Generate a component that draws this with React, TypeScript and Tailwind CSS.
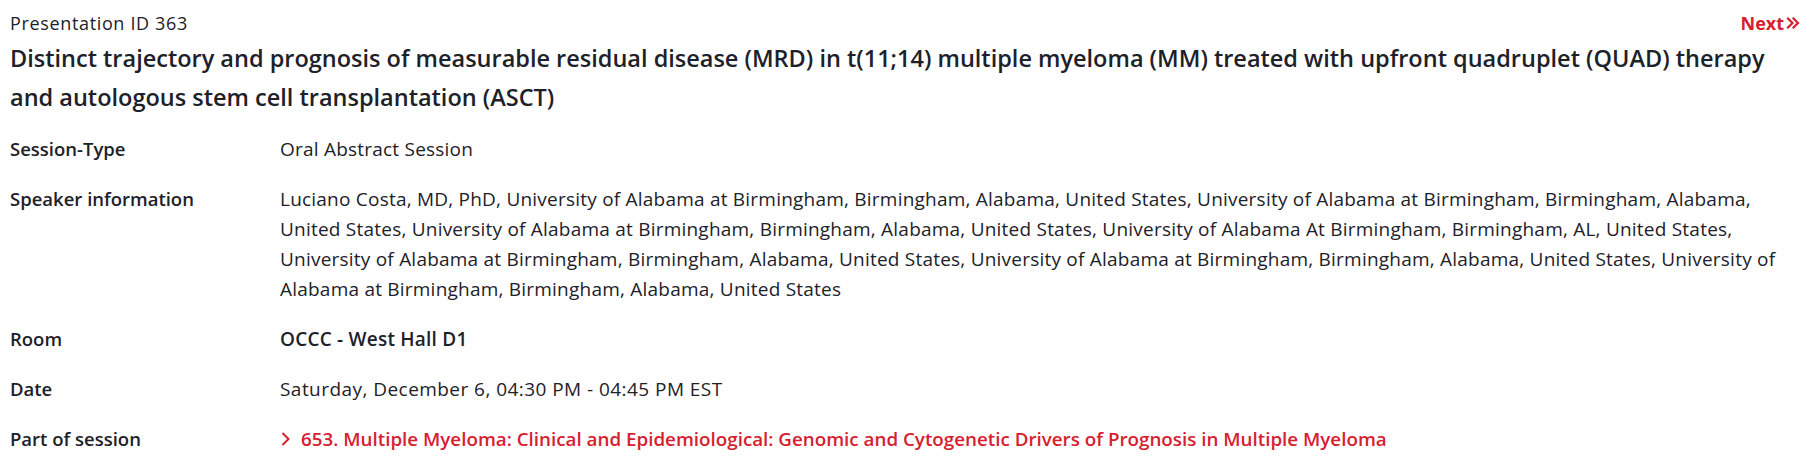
import React from "react";

const Row = ({ label, children }: { label: string; children: React.ReactNode }) => (
  <div className="grid grid-cols-[270px_1fr] leading-[30px]">
    <div className="font-semibold text-[18.5px] text-[#1d2129]">{label}</div>
    <div className="text-[19px] tracking-[0.22px] text-[#1d2129]">{children}</div>
  </div>
);

export default function App() {
  return (
    <div className="w-[1811px] h-[467px] bg-white px-[10px] pt-[11px]" style={{ fontFamily: "'Open Sans', 'Noto Sans', sans-serif" }}>
      <div className="flex items-center justify-between leading-[24px]">
        <span className="text-[18px] tracking-[0.65px] text-[#1d2129]">Presentation ID 363</span>
        <a className="flex items-center text-[18px] font-bold text-[#d7202f] mr-[1px]" href="#">
          Next
          <svg width="14" height="14" viewBox="0 0 14 14" className="ml-[2px]" fill="none" stroke="#d7202f" strokeWidth="2.2" strokeLinecap="square">
            <path d="M2 2.5 L6.5 7 L2 11.5" />
            <path d="M7.5 2.5 L12 7 L7.5 11.5" />
          </svg>
        </a>
      </div>
      <h1 className="mt-[4px] text-[23.5px] leading-[39px] font-semibold text-[#1d2129]">
        <span className="block whitespace-nowrap">
          Distinct trajectory and prognosis of measurable residual disease (MRD) in t(11;14) multiple myeloma (MM) treated with upfront quadruplet (QUAD) therapy
        </span>
        <span className="block whitespace-nowrap">and autologous stem cell transplantation (ASCT)</span>
      </h1>
      <div className="mt-[17px] flex flex-col gap-y-5">
        <Row label="Session-Type">Oral Abstract Session</Row>
        <Row label="Speaker information">
          Luciano Costa, MD, PhD, University of Alabama at Birmingham, Birmingham, Alabama, United States, University of Alabama at Birmingham, Birmingham, Alabama,
          <br />
          United States, University of Alabama at Birmingham, Birmingham, Alabama, United States, University of Alabama At Birmingham, Birmingham, AL, United States,
          <br />
          University of Alabama at Birmingham, Birmingham, Alabama, United States, University of Alabama at Birmingham, Birmingham, Alabama, United States, University of
          <br />
          Alabama at Birmingham, Birmingham, Alabama, United States
        </Row>
        <Row label="Room">
          <span className="font-semibold">OCCC - West Hall D1</span>
        </Row>
        <Row label="Date">
          <span className="tracking-[0.45px]">Saturday, December 6, 04:30 PM - 04:45 PM EST</span>
        </Row>
        <Row label="Part of session">
          <a href="#" className="inline-flex items-center font-semibold text-[18.8px] tracking-[0px] text-[#d7202f]">
            <svg width="11" height="18" viewBox="0 0 11 18" fill="none" stroke="#d7202f" strokeWidth="2" className="mr-[10px]">
              <path d="M2.5 3 L8.5 9 L2.5 15" />
            </svg>
            653. Multiple Myeloma: Clinical and Epidemiological: Genomic and Cytogenetic Drivers of Prognosis in Multiple Myeloma
          </a>
        </Row>
      </div>
    </div>
  );
}
